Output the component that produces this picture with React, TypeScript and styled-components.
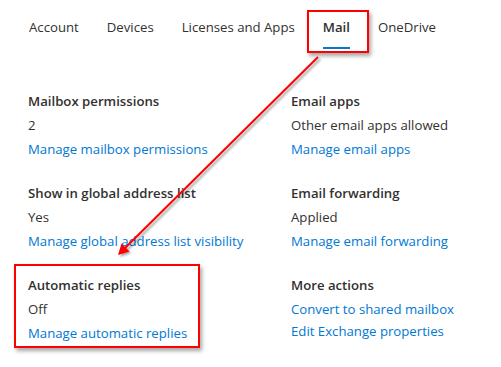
import React from "react";
import styled, { createGlobalStyle } from "styled-components";

const Global = createGlobalStyle`
  html, body { margin: 0; padding: 0; background: #ffffff; }
  body { font-family: "Open Sans", "Noto Sans", sans-serif; color: #323130; }
`;

const Page = styled.div`
  position: relative;
  width: 501px;
  height: 367px;
  overflow: hidden;
  background: #fff;
`;

const TabBar = styled.nav`
  display: flex;
  padding: 15px 0 0 15px;
`;

const Tab = styled.div<{ $active?: boolean }>`
  display: flex;
  flex-direction: column;
  align-items: center;
  padding: 0 14px;
  font-size: 13.2px;
  line-height: 24px;
  font-weight: ${(p) => (p.$active ? 600 : 400)};
  color: #323130;
  white-space: nowrap;
`;

const Underline = styled.span<{ $on?: boolean }>`
  align-self: stretch;
  height: 2px;
  margin-top: 8px;
  background: ${(p) => (p.$on ? "#0078d4" : "transparent")};
`;

const Grid = styled.div`
  display: grid;
  grid-template-columns: 263px 1fr;
  column-gap: 0;
  row-gap: 20px;
  padding: 40px 0 0 28px;
`;

const Section = styled.section`
  display: flex;
  flex-direction: column;
`;

const Title = styled.div`
  font-size: 13.2px;
  font-weight: 600;
  line-height: 24px;
  color: #323130;
`;

const Value = styled.div`
  font-size: 13.2px;
  line-height: 24px;
  color: #323130;
`;

const Link = styled.a<{ $tight?: boolean }>`
  font-size: 13.2px;
  line-height: ${(p) => (p.$tight ? "20px" : "24px")};
  color: #0078d4;
  text-decoration: none;
  cursor: pointer;
  white-space: nowrap;
`;

const Highlight = styled.div`
  position: absolute;
  border: 2px solid #ff0000;
  box-shadow: 2px 3px 4px rgba(0, 0, 0, 0.35);
  pointer-events: none;
`;

const ArrowLayer = styled.svg`
  position: absolute;
  left: 0;
  top: 0;
  pointer-events: none;
`;

const tabs = ["Account", "Devices", "Licenses and Apps", "Mail", "OneDrive"];

type Item = { title: string; value?: string; links: string[] };

const items: Item[] = [
  { title: "Mailbox permissions", value: "2", links: ["Manage mailbox permissions"] },
  { title: "Email apps", value: "Other email apps allowed", links: ["Manage email apps"] },
  { title: "Show in global address list", value: "Yes", links: ["Manage global address list visibility"] },
  { title: "Email forwarding", value: "Applied", links: ["Manage email forwarding"] },
  { title: "Automatic replies", value: "Off", links: ["Manage automatic replies"] },
  { title: "More actions", links: ["Convert to shared mailbox", "Edit Exchange properties"] },
];

export default function App() {
  return (
    <Page>
      <Global />
      <TabBar>
        {tabs.map((t) => (
          <Tab key={t} $active={t === "Mail"}>
            {t}
            <Underline $on={t === "Mail"} />
          </Tab>
        ))}
      </TabBar>
      <Grid>
        {items.map((it) => (
          <Section key={it.title}>
            <Title>{it.title}</Title>
            {it.value && <Value>{it.value}</Value>}
            {it.links.map((l, i) => (
              <Link key={l} $tight={!it.value && i > 0}>
                {l}
              </Link>
            ))}
          </Section>
        ))}
      </Grid>
      <Highlight style={{ left: 307, top: 10, width: 58, height: 39 }} />
      <Highlight style={{ left: 14, top: 264, width: 182, height: 80 }} />
      <ArrowLayer width={501} height={367} viewBox="0 0 501 367">
        <defs>
          <filter id="sh" x="-20%" y="-20%" width="140%" height="140%">
            <feGaussianBlur stdDeviation="1" />
          </filter>
        </defs>
        <g transform="translate(2,2)" opacity="0.35" filter="url(#sh)">
          <line x1="318" y1="57" x2="124" y2="249" stroke="#000" strokeWidth="2" />
          <polygon points="118,255 122,244 129,251" fill="#000" />
        </g>
        <line x1="318" y1="57" x2="124" y2="249" stroke="#ff0000" strokeWidth="2" />
        <polygon points="118,255 121.5,243.5 129.5,251.5" fill="#ff0000" />
      </ArrowLayer>
    </Page>
  );
}
